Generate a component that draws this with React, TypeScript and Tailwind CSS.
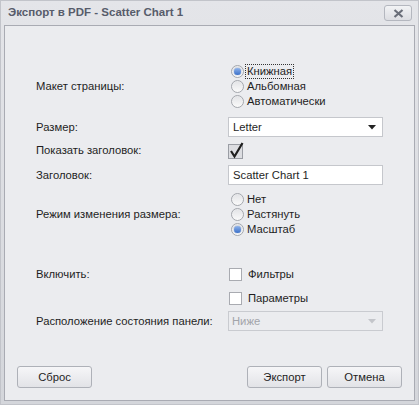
import React from "react";

const font = { fontFamily: '"Liberation Sans", Arial, sans-serif' };

function Radio({ label, checked, focused }: { label: string; checked?: boolean; focused?: boolean }) {
  return (
    <div className="flex h-[15px] items-center">
      <span className="relative flex h-[13px] w-[13px] items-center justify-center rounded-full border border-[#a4a7ad] bg-gradient-to-b from-[#e2e3e6] to-[#fafafa] shadow-[inset_0_0_1px_#ffffff]">
        {checked && (
          <span className="h-[7px] w-[7px] rounded-full bg-gradient-to-b from-[#8fb3ea] to-[#3a6fc8] shadow-[0_0_1px_#2a56a8]" />
        )}
      </span>
      <span
        className={
          "ml-[2px] px-[1px] text-[11.25px] leading-[13px] text-[#1e1e1e]" +
          (focused ? " outline outline-1 outline-dotted outline-[#333]" : "")
        }
      >
        {label}
      </span>
    </div>
  );
}

function Check({ label }: { label: string }) {
  return (
    <div className="flex h-[15px] items-center">
      <span className="h-[13px] w-[13px] border border-[#a9abb1] bg-white" />
      <span className="ml-[6px] text-[11.25px] text-[#1e1e1e]">{label}</span>
    </div>
  );
}

function Caret({ color }: { color: string }) {
  return (
    <svg width="8" height="5" viewBox="0 0 8 5">
      <path d="M0 0 H8 L4 4.5 Z" fill={color} />
    </svg>
  );
}

function Button({ label }: { label: string }) {
  return (
    <button className="flex h-[22px] w-[75px] items-center justify-center rounded-[3px] border border-[#aeb1b8] bg-gradient-to-b from-[#f6f6f8] to-[#e2e3e7] text-[11.25px] text-[#1e1e1e]">
      {label}
    </button>
  );
}

function Row({ label, children, h }: { label: string; children?: React.ReactNode; h: string }) {
  return (
    <div className={"flex items-center " + h}>
      <div className="w-[223px] shrink-0 whitespace-nowrap pl-[31px] text-[11.25px] text-[#1e1e1e]">{label}</div>
      <div className="flex-1">{children}</div>
    </div>
  );
}

export default function App() {
  return (
    <div style={font} className="h-[405px] w-[419px] bg-[#c2c4ca] p-[1px]">
      <div className="flex h-full flex-col bg-gradient-to-b from-[#e4e5e9] to-[#d4d6db] px-[3px] pb-[3px]">
        {/* title bar */}
        <div className="flex h-[24px] items-center justify-between pl-[4px] pr-[3px]">
          <span className="text-[11.5px] font-bold text-[#575c6b]">Экспорт в PDF - Scatter Chart 1</span>
          <span className="flex h-[16px] w-[28px] items-center justify-center rounded-[3px] border border-[#b4b7bf] bg-gradient-to-b from-[#f2f3f5] to-[#dcdde2]">
            <svg width="11" height="9" viewBox="0 0 11 9">
              <path d="M1.5 1 L9.5 8 M9.5 1 L1.5 8" stroke="#6a6e79" strokeWidth="2.2" />
            </svg>
          </span>
        </div>
        {/* body */}
        <div className="flex flex-1 flex-col border border-[#a9abb3] bg-[#ebecef]">
          <div className="h-[38px]" />
          <Row label="Макет страницы:" h="h-[45px]">
            <div className="pl-[3px]">
              <Radio label="Книжная" checked focused />
              <Radio label="Альбомная" />
              <Radio label="Автоматически" />
            </div>
          </Row>
          <div className="h-[8px]" />
          <Row label="Размер:" h="h-[20px]">
            <div className="flex h-[20px] w-[155px] items-center justify-between border border-[#c5c7cc] bg-white pl-[4px] pr-[6px] text-[11.25px] text-[#1e1e1e]">
              <span>Letter</span>
              <Caret color="#222" />
            </div>
          </Row>
          <div className="h-[5px]" />
          <Row label="Показать заголовок:" h="h-[17px]">
            <div className="relative h-[17px] w-[17px]">
              <span className="absolute left-0 top-[2px] h-[15px] w-[15px] border border-[#9a9da4] bg-[#dcdde1]" />
              <svg className="absolute left-0 top-0" width="17" height="17" viewBox="0 0 17 17">
                <path d="M3 9 L6.5 14.5 L14.5 1" fill="none" stroke="#1e1e1e" strokeWidth="2.2" />
              </svg>
            </div>
          </Row>
          <div className="h-[6px]" />
          <Row label="Заголовок:" h="h-[20px]">
            <div className="flex h-[20px] w-[155px] items-center border border-[#c5c7cc] bg-white pl-[4px] text-[11.25px] text-[#1e1e1e]">
              Scatter Chart 1
            </div>
          </Row>
          <div className="h-[7px]" />
          <Row label="Режим изменения размера:" h="h-[45px]">
            <div className="pl-[3px]">
              <Radio label="Нет" />
              <Radio label="Растянуть" />
              <Radio label="Масштаб" checked />
            </div>
          </Row>
          <div className="h-[30px]" />
          <Row label="Включить:" h="h-[15px]">
            <div className="pl-[1px]">
              <Check label="Фильтры" />
            </div>
          </Row>
          <div className="h-[9px]" />
          <Row label="" h="h-[15px]">
            <div className="pl-[1px]">
              <Check label="Параметры" />
            </div>
          </Row>
          <div className="h-[5px]" />
          <Row label="Расположение состояния панели:" h="h-[20px]">
            <div className="flex h-[20px] w-[155px] items-center justify-between border border-[#c9cbd0] bg-[#ebecef] pl-[3px] pr-[6px] text-[11.25px] text-[#a2a4aa]">
              <span>Ниже</span>
              <Caret color="#c3c5ca" />
            </div>
          </Row>
          <div className="flex-1" />
          <div className="flex items-center justify-between px-[12px] pb-[12px]">
            <Button label="Сброс" />
            <div className="flex gap-[5px]">
              <Button label="Экспорт" />
              <Button label="Отмена" />
            </div>
          </div>
        </div>
      </div>
    </div>
  );
}
